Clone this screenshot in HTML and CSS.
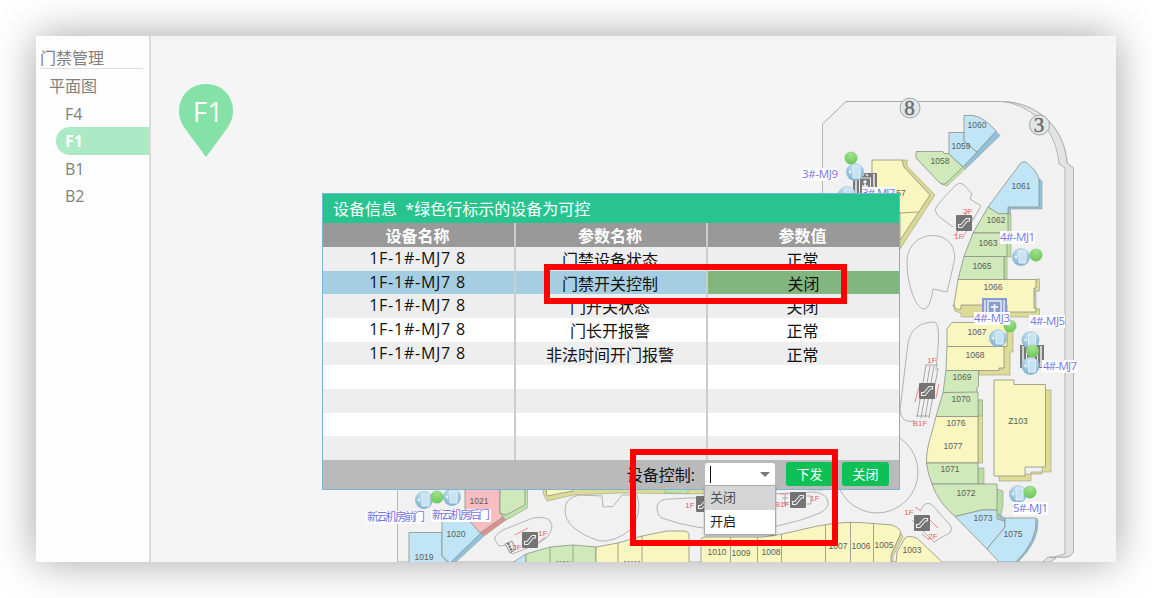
FILE: index.html
```html
<!DOCTYPE html>
<html lang="zh-CN">
<head>
<meta charset="utf-8">
<title>门禁管理</title>
<link rel="stylesheet" href="styles.css">
</head>
<body>
<div class="window">
  <nav class="sidebar">
    <h1 class="sidebar-title">门禁管理</h1>
    <div class="group">平面图</div>
    <ul class="floors">
      <li>F4</li>
      <li class="active">F1</li>
      <li>B1</li>
      <li>B2</li>
    </ul>
  </nav>
  <main class="stage">
    <svg class="map" viewBox="151 36 965 526" width="965" height="526">
      <defs>
        <radialGradient id="ball" cx=".5" cy=".25" r=".8"><stop offset="0" stop-color="#d3e6f0"/><stop offset=".6" stop-color="#9ac5de"/><stop offset="1" stop-color="#7caecb"/></radialGradient>
        <radialGradient id="dot" cx=".5" cy=".2" r=".8"><stop offset="0" stop-color="#a5e092"/><stop offset="1" stop-color="#6bc957"/></radialGradient>
        <g id="device"><circle r="9" fill="url(#ball)"/><path d="M-2-6H5V6H-2Z" fill="#c6e2f3" stroke="#e4f1f8" stroke-width=".9"/><path d="M-7 0L-4-1.8V1.8Z" fill="#e8f5fb"/></g>
        <circle id="on" r="6.5" fill="url(#dot)"/>
        <g id="esc"><rect width="16" height="16" rx="1" fill="#747474"/><path d="M2.500 12.500H6L11.500 6H13.500V3.500H10L4.800 9.500H2.500Z" fill="none" stroke="#eee" stroke-width="1.100"/></g>
        <g id="lift"><rect width="24" height="23" fill="#787878"/><path d="M3 1V22M21 1V22" stroke="#eee" stroke-width="1.5"/><rect x="6.500" y="5" width="11" height="17" fill="none" stroke="#eee"/><circle cx="12" cy="9" r="1.700" fill="#eee"/><path d="M12 11V20M9 13H15M9 3L11 1M13 1L15 3" stroke="#eee" stroke-width="1.500"/></g>
      </defs>

      <!-- building outline -->
      <path d="M822.500 490V124L846 101.500H1003C1040 103 1065 130 1067 163L1073.500 168V550Q1073 556 1066 557H1050L1043 562H397.500V480Z" fill="#f1f1f1" stroke="#aaa"/>
      <path d="M1003 101.500C1040 103 1065 130 1067 163L1073.500 168V550Q1073 556 1066 557H1054L1065 554V168L1059 164C1056 127 1030 105 1003 101.500Z" fill="#e3e3e3" stroke="#b4b4b4"/>
      <path d="M1043 562L1048 557L1056 558L1050 562Z" fill="#e3e3e3" stroke="#aaa"/>
      <path d="M398 480V561.500H300V480Z M822 120V480H700V100Z" fill="#f5f5f5"/>
      <path d="M397.500 480V562M822.500 193V124" stroke="#b9b9b9"/>

      <g class="walk">
        <circle cx="877" cy="472" r="41"/>
        <path d="M907 262C907 245 920 235 933 235.500C950 236 957 250 954 262Q950 280 947 292L933 289Q930 309 924 309C916 309 907 285 907 262Z"/>
        <path d="M908 343Q912 322 935 322Q939 324 938.500 342L936 370M908 343L900 410Q901 424 915 421"/>
        <path d="M935 210Q935 206 956 185Q961 181 966 187L972 194L970 199L981 206L962 239M935 210Q936 215 942 219L953 227"/>
        <path d="M565 510Q565 497 580 495L602 496L603 507L613 506.500L622 495H637Q643 514 630 530Q615 542 600 541Q565 530 565 510Z"/>
        <path d="M657 508Q657 499 670 499L813 492Q827 493 828 502Q829 508 820 513Q780 530 733 530Q695 530 662 518Q657 515 657 508Z"/>
        <path d="M495 540Q493 536 503 530L533 518Q550 515 552 525Q552 533 545 539Q537 545 512 554L508 545L499 546Z"/>
        <path d="M920 511L924 505Q929 501 934 507L950 525Q953 529 950 533L944 536L934 542L931 539L912 520"/>
      </g>

      <g class="edge">
        <path d="M902 160H907V166L935 195L900 249V200Z" fill="#dcd892"/>
        <path d="M965 165L977 152L996 131L1000 135.500L965 169.500Z" fill="#8ec2e0"/>
        <path d="M941 181L963 165L965 169L947 186L941 184Z" fill="#bfe3ae"/>
        <path d="M1037 177L1042 181V209H1010.500V216H1008V204Z" fill="#93c4df"/>
        <path d="M1004 214H1011V257H1007V279H1004Z" fill="#b9dda5"/>
        <path d="M1036 279H1039.500V291H1036V308L1039.500 309V317H961V313L955 311L953 305L962 300H1034Z" fill="#dedb96"/>
        <path d="M1005 323H1013V352H1010V375H979V369H1003Z" fill="#dedb96"/>
        <path d="M978 400H982.500V463H978Z" fill="#dedb96"/>
        <path d="M978 400H982.500V416H978Z" fill="#b9dda5"/>
        <path d="M978 468H984V484H978Z" fill="#b9dda5"/>
        <path d="M997 489L1003 491V505L1000 520H996Z" fill="#b9dda5"/>
        <path d="M998 516L1002 519V527H1005V518L999 514Z" fill="#8ec2e0"/>
        <path d="M1043 390H1051V472H1031V481H999V474H1042Z" fill="#dedb96"/>
        <path d="M1036 518L1038 520Q1039 542 1018 562H1013Z" fill="#8ec2e0"/>
        <path d="M481 532L484 536L456 562H448Z" fill="#8ec2e0"/>
        <path d="M502 516L506 520L484 536L480 532Z" fill="#dc8f90"/>
        <path d="M525 485H527.500V508L506 520L502 515Z" fill="#bfe3ae"/>
        <path d="M543 485V493L547 501L573 495L620 493L710 494V485Z" fill="#dedb96"/>
        <path d="M665 485H688V493.500L665 493Z" fill="#bfe3ae"/>
        <path d="M901 533L903 537L893 556V562H888Z" fill="#dedb96"/>
      </g>

      <g class="shops">
        <path class="y" d="M872 160H902L904 167L930 195L900 240V212H872Z"/>
        <path d="M900 213L918 212"/>
        <path class="g" d="M916 151.500H943L944 153.500H949V154L963 167L945 184Q941 185 936 179L916 158Z"/>
        <path class="b" d="M949 132.500H964V141L977 152L963 167L949 154Z"/>
        <path class="b" d="M964 115.500H973Q984 117 996 131L977 152L964 141Z"/>
        <path class="b" d="M988 207L1020 164Q1023 160 1027 163Q1037 171 1039 179V207H1008V214H998Z"/>
        <path class="g" d="M988 207L998 213.500L1008 214V233H973Z"/>
        <path class="g" d="M973 233H1007V256.500H964Z"/>
        <path class="g" d="M964 256.500H1004V279.500H958Z"/>
        <path class="y" d="M958 279.500H1036V288H1034V308L1036 309V312H1007V305H961V309Q955 311 954 304Z"/>
        <path class="y" d="M952 322.500H1007V346.500H947V329Z"/>
        <path class="y" d="M947 346.500H1004V368H999V370.500H946Z"/>
        <path class="g" d="M946 370.500H978.500V386L977 388V392.500H943Z"/>
        <path class="g" d="M943 392.500L978 392V416.500H936Z"/>
        <path class="y" d="M936 416.500H978V463H926.500Q926 450 932 432Z"/>
        <path class="g" d="M926.500 463H978V484H932Q928 475 926.500 463Z"/>
        <path class="g" d="M932 484H997V510H982L955 516.500Q938 502 932 484Z"/>
        <path class="b" d="M955 516.500L982 510H997V519L1005 521V527L987 549Z"/>
        <path class="b" d="M987 549L1005 527V518H1036Q1038 540 1016 562H999Z"/>
        <path class="y" d="M994 380H1014V384.500H1045.500V467H1025V476H994Z"/>
        <path class="b" d="M409 532.500H442V556L448 563H409Z"/>
        <path class="b" d="M442 520H469L481 533L450 563L442 556Z"/>
        <path class="r" d="M465 480H500V513L503 517L480 533L469 520L465 517Z"/>
        <path class="g" d="M500 480H525V505L506 515L500 513Z"/>
        <path class="y" d="M545 480H573V491L547 496Z"/>
        <path class="b" d="M512 563L526 554V563Z"/>
        <path class="g" d="M526 554L550 547L573 545L596 547V563H526ZM550 547V562M573 545V562"/>
        <path class="y" d="M596 547L618 543L642 536L667 531H683Q689 531 689 535V563H596ZM618 543V562M642 536V562"/>
        <path class="y" d="M701 563V540Q701 537 705 537H763Q780 535 800 530Q835 521 860 522.500L892 525Q903 529 900 535L891 555V563ZM730.500 537V562M757.500 537V562M781.500 534V562M825.500 525V562M850.500 522V562M873.500 523V562"/>
        <path class="y" d="M896 563L897 552L905 538Q908 535 917 538L943 563Z"/>
      </g>

      <g class="nums">
        <text x="977" y="128">1060</text><text x="961" y="149">1059</text><text x="940" y="164">1058</text><text x="901" y="196">57</text>
        <text x="1021" y="189">1061</text><text x="996" y="223">1062</text><text x="988" y="246">1063</text><text x="982" y="269">1065</text>
        <text x="993" y="290">1066</text><text x="977" y="335">1067</text><text x="975" y="358">1068</text><text x="962" y="380">1069</text>
        <text x="961" y="402">1070</text><text x="956" y="426">1076</text><text x="953" y="449">1077</text><text x="950" y="472">1071</text>
        <text x="966" y="496">1072</text><text x="983" y="521">1073</text><text x="1013" y="537">1075</text><text x="1018" y="424">Z103</text>
        <text x="479" y="504">1021</text><text x="456" y="537">1020</text><text x="424" y="560">1019</text>
        <text x="717" y="555">1010</text><text x="741" y="556">1009</text><text x="771" y="555">1008</text><text x="838" y="549">1007</text>
        <text x="861" y="549">1006</text><text x="884" y="548">1005</text><text x="912" y="553">1003</text>
      </g>
      <path d="M556 561.500H571M624 561.500H640" stroke="#8b8b78" stroke-dasharray="2 1.500"/>

      <g class="badges"><circle cx="910" cy="108" r="10"/><circle cx="1039.500" cy="125" r="10"/><text x="909.500" y="115">8</text><text x="1039" y="132">3</text></g>

      <!-- escalators -->
      <path d="M926 365L917 417M930 366L921 418M934 366L925 418M938 368L929 418M925 365H938M916 416H929M785 495V506M782 498H788M782 503H788M807 496H811V504H807" fill="none" stroke="#a8a8a8"/>
      <path d="M919 387L915 402M939 384L936 398M968 211L963 218M958 231L954 236M973 217L970 222M930 520L938 528M921 511L915 507M922 534L929 540M515 535L528 528M538 543L545 537M780 494H788" fill="none" stroke="#ea8984"/>
      <path d="M505 544L512 541L516 549L510 553Z" fill="#e5e5e5" stroke="#999"/><path d="M508 543L512 552" stroke="#666" stroke-width="2" stroke-dasharray="2 1"/>
      <use href="#esc" x="956" y="215"/><use href="#esc" x="919" y="383"/><use href="#esc" x="914" y="515"/><use href="#esc" x="790" y="492"/><use href="#esc" x="696" y="496"/><use href="#esc" x="522" y="532"/>
      <g class="marks"><text x="968" y="214">2F</text><text x="959" y="239">1F</text><text x="932" y="363">1F</text><text x="920" y="426">B1F</text><text x="909" y="515">1F</text><text x="933" y="539">2F</text><text x="815" y="501">1F</text><text x="782" y="507">B1F</text><text x="690" y="508">1F</text><text x="543" y="536">1F</text><text x="517" y="550">2F</text></g>

      <!-- lifts and door controllers -->
      <use href="#lift" x="853" y="173"/><use href="#lift" x="1020" y="345"/>
      <rect x="982" y="298" width="25" height="19" fill="#869dce"/><path d="M985 300V314M1004 300V314M988 301H1001V315H988Z" fill="none" stroke="#e9edf6" stroke-width="1.500"/><path d="M994.500 304V315M991 307H998" stroke="#e9edf6" stroke-width="2"/>
      <use href="#device" x="855" y="172"/><use href="#device" x="847" y="195"/><use href="#device" x="1021" y="257"/><use href="#device" x="998" y="338"/><use href="#device" x="1030.500" y="340"/><use href="#device" x="1030.500" y="366"/><use href="#device" x="424" y="500"/><use href="#device" x="452" y="497"/><use href="#device" x="1018" y="494"/>
      <use href="#on" x="851" y="158"/><use href="#on" x="1036" y="255"/><use href="#on" x="1010" y="326"/><use href="#on" x="1032.500" y="351"/><use href="#on" x="437" y="497"/><use href="#on" x="1030" y="492"/>
      <path class="plates" d="M801 168H838V181H801ZM862 187H896V200H862ZM1000 231H1035V244H1000ZM974 312H1010V325H974ZM1029 315H1065V328H1029ZM1042 360H1077V373H1042ZM1013 502H1048V515H1013ZM366 511H425V524H366ZM431 509H491V522H431Z"/>
      <g class="labels"><text x="802" y="178" textLength="36">3#-MJ9</text><text x="862" y="197" textLength="33">3#-MJ7</text><text x="1000" y="241" textLength="35">4#-MJ1</text><text x="974" y="322" textLength="36">4#-MJ3</text><text x="1030" y="325" textLength="35">4#-MJ5</text><text x="1043" y="370" textLength="34">4#-MJ7</text><text x="1013" y="512" textLength="35">5#-MJ1</text><text x="367" y="521" textLength="58">新云机房前门</text><text x="432" y="519" textLength="58">新云机房后门</text></g>

      <!-- floor pin -->
      <path d="M206 84C222 84 233 96 233 111C233 119 230 124 226 130L206 157L186 130C182 124 179 119 179 111C179 96 190 84 206 84Z" fill="#84e2a9"/>
      <text class="pin" x="208" y="121.500">F1</text>
    </svg>

    <section class="dialog">
      <header class="dialog-title">设备信息&nbsp; *绿色行标示的设备为可控</header>
      <div class="table">
        <div class="row head"><span>设备名称</span><span>参数名称</span><span>参数值</span></div>
        <div class="row"><span>1F-1#-MJ7 8</span><span>门禁设备状态</span><span>正常</span></div>
        <div class="row selected"><span>1F-1#-MJ7 8</span><span>门禁开关控制</span><span>关闭</span></div>
        <div class="row"><span>1F-1#-MJ7 8</span><span>门开关状态</span><span>关闭</span></div>
        <div class="row"><span>1F-1#-MJ7 8</span><span>门长开报警</span><span>正常</span></div>
        <div class="row"><span>1F-1#-MJ7 8</span><span>非法时间开门报警</span><span>正常</span></div>
        <div class="row"><span></span><span></span><span></span></div>
        <div class="row"><span></span><span></span><span></span></div>
        <div class="row"><span></span><span></span><span></span></div>
        <div class="row"><span></span><span></span><span></span></div>
      </div>
      <footer class="actions">
        <span class="control-label">设备控制:</span>
        <div class="combo">
          <i class="caret"></i><i class="arrow"></i>
          <div class="menu"><div class="option hover">关闭</div><div class="option">开启</div></div>
        </div>
        <button class="btn send">下发</button>
        <button class="btn">关闭</button>
      </footer>
    </section>
  </main>
  <div class="callout callout-row"></div>
  <div class="callout callout-control"></div>
</div>
</body>
</html>
```
FILE: styles.css
```css
* { box-sizing: border-box; }
body {
  margin: 0;
  padding: 36px;
  height: 598px;
  overflow: hidden;
  background: #fff;
  font: 16px "Open Sans", "Noto Sans CJK SC", sans-serif;
}
.window {
  position: relative;
  display: flex;
  width: 1080px;
  height: 526px;
  box-shadow: 0 0 40px rgba(0, 0, 0, .36);
}
.sidebar {
  width: 115px;
  padding: 9px 0 0;
  background: #fdfdfd;
  border-right: 2px solid #d9d9d9;
  color: #808080;
}
.sidebar-title {
  margin: 0 6px 0 4px;
  height: 24px;
  border-bottom: 1px solid #dedede;
  font-size: 16px;
  font-weight: 400;
  line-height: 26px;
}
.group { height: 31px; padding-left: 13px; line-height: 35px; }
.floors { margin: 0; padding: 0 0 0 20px; list-style: none; }
.floors li { height: 27.300px; padding-left: 9px; line-height: 28px; }
.floors .active {
  border-radius: 14px 0 0 14px;
  background: #aceac5;
  color: #fff;
  font-weight: 700;
}
.stage { position: relative; width: 965px; background: #f5f5f5; }
.map { display: block; }
.walk { fill: none; stroke: #b3b3b3; }
.edge { stroke: #9b9f86; stroke-width: .6; }
.shops { stroke: #8e9184; stroke-width: .8; }
.y { fill: #f9f6c0; }
.g { fill: #cfe9ba; }
.b { fill: #c0e5f6; }
.r { fill: #f8bdc0; }
.nums { font: 8.500px "Liberation Sans", sans-serif; fill: #5c5c5c; text-anchor: middle; }
.badges { fill: #e1e6e8; stroke: #a0a4a6; }
.badges text { font: 21px "Liberation Serif", serif; fill: #6c6c6c; stroke: #6c6c6c; stroke-width: .4; text-anchor: middle; }
.marks { font: 8px "Liberation Sans", sans-serif; fill: #e5645e; text-anchor: middle; }
.plates { fill: #fdfdfd; }
.labels { font: 11.500px "Open Sans", "Noto Sans CJK SC", sans-serif; fill: #7777e5; }
.pin { font: 28px "Open Sans", sans-serif; fill: #fff; text-anchor: middle; }

.dialog {
  position: absolute;
  left: 171px;
  top: 157px;
  width: 578px;
  height: 297px;
  border: 1px solid #76b4da;
  background: #fff;
  color: #111;
}
.dialog-title {
  height: 29px;
  padding-left: 10px;
  background: #28c48f;
  color: #fff;
  line-height: 31px;
}
.table { display: grid; grid-template-rows: 24px repeat(9, 23.667px); }
.row { display: grid; grid-template-columns: 193px 192px 191px; line-height: 24px; text-align: center; background: #fff; }
.row:nth-child(even) { background: #eee; }
.row span { height: 100%; border-right: 2px solid #ccc; padding: 1px 2px 0 0; }
.row span:first-child { padding-top: 0; line-height: 22px; letter-spacing: .75px; }
.row span:last-child { border-right: 0; }
.row.head { background: #999; color: #fff; font-weight: 700; }
.row.head span { padding-top: 1px; line-height: 24px; letter-spacing: 0; }
.row.selected { background: #a6cee3; }
.row.selected span:last-child { background: #81b681; padding-right: 0; }
.actions {
  display: flex;
  align-items: center;
  justify-content: flex-end;
  height: 29px;
  padding-right: 10px;
  background: #bababa;
}
.control-label { margin-right: 10px; }
.combo {
  position: relative;
  display: flex;
  align-items: center;
  justify-content: space-between;
  width: 70px;
  height: 23px;
  padding: 0 5px;
  border-radius: 3px;
  background: #fff;
}
.caret { width: 1px; height: 17px; background: #111; }
.arrow { border: 5px solid transparent; border-top-color: #777; border-bottom: 0; }
.menu {
  position: absolute;
  left: -1px;
  top: 22px;
  width: 72px;
  border: 1px solid #aaa;
  border-radius: 0 0 2px 2px;
  background: #fff;
  box-shadow: 0 1px 2px rgba(0, 0, 0, .3);
}
.option { height: 24px; padding-left: 5px; font-size: 13px; line-height: 22px; color: #222; }
.option.hover { background: #d5d5d5; color: #47505a; }
.btn {
  width: 47px;
  height: 24px;
  margin-left: 9px;
  padding: 0;
  border: 0;
  border-radius: 3px;
  background: #0dc157;
  color: #fff;
  font: 13px/24px "Noto Sans CJK SC", sans-serif;
}
.send { margin-left: 11px; }
.callout { position: absolute; border: 6px solid #f00; }
.callout-row { left: 508px; top: 228px; width: 303px; height: 40px; }
.callout-control { left: 594px; top: 413px; width: 208px; height: 97px; }
```
